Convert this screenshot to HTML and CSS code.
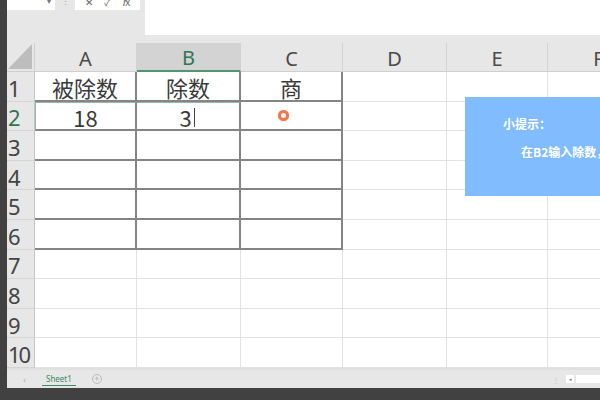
FILE: index.html
```html
<!DOCTYPE html>
<html lang="zh-CN">
<head>
<meta charset="utf-8">
<title>Sheet</title>
<link rel="stylesheet" href="styles.css">
</head>
<body>
<div class="app">
  <div class="edge"></div>
  <div class="main">
    <div class="fbar">
      <div class="namebox"><span class="nb-arrow">▾</span></div>
      <div class="sep">⋮</div>
      <div class="fbtns"><span>✕</span><span>✓</span><span><i>f</i>x</span></div>
      <div class="finput"></div>
    </div>
    <div class="sheet">
      <div class="corner"><svg width="24" height="25" viewBox="0 0 24 25"><polygon points="24,0 24,25 0,25" fill="#bdbdbd"/></svg></div>
      <div class="ch">A</div>
      <div class="ch sel">B</div>
      <div class="ch">C</div>
      <div class="ch">D</div>
      <div class="ch">E</div>
      <div class="ch">F</div>

      <div class="rh">1</div>
      <div class="c t txt">被除数</div>
      <div class="c t txt">除数</div>
      <div class="c t txt">商</div>
      <div class="c"></div><div class="c"></div><div class="c"></div>

      <div class="rh rsel">2</div>
      <div class="c t txt g1">18</div>
      <div class="c t txt g2"><span class="num3">3</span><span class="caret"></span></div>
      <div class="c t dotcell"><span class="dot"></span></div>
      <div class="c"></div><div class="c"></div><div class="c"></div>

      <div class="rh">3</div>
      <div class="c t"></div><div class="c t"></div><div class="c t"></div>
      <div class="c"></div><div class="c"></div><div class="c"></div>

      <div class="rh">4</div>
      <div class="c t"></div><div class="c t"></div><div class="c t"></div>
      <div class="c"></div><div class="c"></div><div class="c"></div>

      <div class="rh">5</div>
      <div class="c t"></div><div class="c t"></div><div class="c t"></div>
      <div class="c"></div><div class="c"></div><div class="c"></div>

      <div class="rh">6</div>
      <div class="c t"></div><div class="c t"></div><div class="c t"></div>
      <div class="c"></div><div class="c"></div><div class="c"></div>

      <div class="rh">7</div>
      <div class="c"></div><div class="c"></div><div class="c"></div>
      <div class="c"></div><div class="c"></div><div class="c"></div>

      <div class="rh">8</div>
      <div class="c"></div><div class="c"></div><div class="c"></div>
      <div class="c"></div><div class="c"></div><div class="c"></div>

      <div class="rh">9</div>
      <div class="c"></div><div class="c"></div><div class="c"></div>
      <div class="c"></div><div class="c"></div><div class="c"></div>

      <div class="rh">10</div>
      <div class="c"></div><div class="c"></div><div class="c"></div>
      <div class="c"></div><div class="c"></div><div class="c"></div>

      <div class="tip">
        <div class="tip-title">小提示：</div>
        <div class="tip-body">在B2输入除数，C2显示商</div>
      </div>
    </div>
    <div class="tabs">
      <span class="tab-nav">‹</span>
      <span class="tab">Sheet1</span>
      <span class="tab-add">+</span>
      <span class="spacer"></span>
      <span class="sb-dots">⋮</span>
      <span class="sb-btn">◂</span>
      <span class="sb-track"></span>
    </div>
  </div>
</div>
</body>
</html>
```

FILE: styles.css
```css
* { box-sizing: border-box; }
html, body { margin: 0; padding: 0; }
body {
  width: 600px;
  height: 400px;
  overflow: hidden;
  background: #414141;
  font-family: "Noto Sans CJK SC", "Noto Sans", sans-serif;
}
.app { display: flex; width: 600px; height: 388px; }
.edge { width: 7px; background: #414141; flex: none; }
.main { flex: 1; display: flex; flex-direction: column; background: #e7e7e7; overflow: hidden; min-width: 0; }

/* formula bar */
.fbar { height: 43px; display: flex; align-items: flex-start; flex: none; }
.namebox {
  width: 48px; height: 10px; background: #fff; position: relative; overflow: hidden;
}
.nb-arrow { position: absolute; right: 4px; top: -5px; font-size: 8px; color: #777; }
.sep { width: 20px; height: 10px; overflow: hidden; font-size: 9px; line-height: 4px; color: #aaa; text-align: center; }
.fbtns {
  width: 65px; height: 10px; background: #fff; overflow: hidden;
  display: flex; justify-content: space-around; padding: 0 4px;
}
.fbtns span { font-size: 10px; line-height: 6px; color: #666; margin-top: -1px; }
.fbtns i { font-style: italic; }
.finput { margin-left: 5px; flex: 1; height: 35px; background: #fff; }

/* sheet grid */
.sheet {
  position: relative;
  display: grid;
  width: 643px;
  grid-template-columns: 28px 102px 104px 102px 104px 101px 102px;
  grid-template-rows: 29px repeat(10, 29.6px);
  background: #fff;
  flex: none;
}
.corner {
  background: #e7e7e7; border-right: 1px solid #cfcfcf; border-bottom: 1px solid #cfcfcf;
  display: flex; align-items: flex-end; justify-content: flex-end; padding: 0 2px 2px 0;
}
.ch {
  background: #e7e7e7; border-right: 1px solid #d2d2d2; border-bottom: 1px solid #cfcfcf;
  display: flex; align-items: center; justify-content: center;
  font-family: "Noto Sans", sans-serif; font-size: 20px; color: #4a4a4a; padding-top: 2px;
}
.ch.sel { background: #d3d3d3; color: #2f7552; border-bottom: 2px solid #4f9672; }
.rh {
  background: #e7e7e7; border-right: 1px solid #c4c4c4; border-bottom: 1px solid #d4d4d4;
  font-family: "Noto Sans", sans-serif; font-size: 22px; color: #444;
  display: flex; align-items: center; padding-left: 1px; letter-spacing: -2px; padding-top: 3px;
  overflow: hidden;
}
.rh.rsel { color: #2f7552; }
.c { border-right: 1px solid #e2e2e2; border-bottom: 1px solid #e2e2e2; }
.c.t { border-right: 2px solid #858585; border-bottom: 2px solid #858585; }
.txt {
  display: flex; align-items: center; justify-content: center;
  font-size: 22px; color: #3a3a3a; padding-top: 3px;
}
.g1 { border-color: #82b39a; border-left: 1px solid #8fbca5; border-top: 1px solid #8fbca5; }
.g2 { border-right-color: #82b39a; border-bottom-color: #82b39a; border-top: 1px solid #8fbca5; }
.num3 { margin-left: -2px; }
.caret { width: 1px; height: 19px; background: #444; margin-left: 2px; }
.dotcell { display: flex; align-items: center; justify-content: center; padding-right: 16px; }
.dot {
  width: 11px; height: 11px; border-radius: 50%;
  border: 3px solid #ea7a4e; background: #fdf2ee; box-shadow: 0 0 1px #f0a080;
}

.tip {
  position: absolute; left: 458px; top: 54px; width: 150px; height: 99px;
  background: #80bcff; color: #fff; overflow: hidden; white-space: nowrap;
}
.tip-title { position: absolute; left: 38px; top: 18px; font-size: 12px; font-weight: 700; }
.tip-body { position: absolute; left: 56px; top: 46px; font-size: 12px; font-weight: 700; }

/* tab bar */
.tabs {
  flex: 1; display: flex; align-items: center; background: #e7e7e7;
  border-top: 2px solid #e0e0e0; font-family: "Noto Sans", sans-serif; padding-top: 1px;
}
.tab-nav { width: 35px; text-align: center; font-size: 8px; color: #aaa; }
.tab {
  font-size: 8px; color: #3c8a62; padding: 0 4px 1px; border-bottom: 1px solid #3c8a62;
  margin-right: 16px; line-height: 11px;
}
.tab-add {
  width: 10px; height: 10px; border: 1px solid #bbb; border-radius: 50%;
  font-size: 8px; line-height: 8px; text-align: center; color: #aaa;
}
.spacer { flex: 1; }
.sb-dots { font-size: 8px; color: #bbb; margin-right: 6px; }
.sb-btn { width: 8px; height: 8px; background: #fff; font-size: 5px; line-height: 8px; text-align: center; color: #777; margin-right: 2px; }
.sb-track { width: 24px; height: 8px; background: #fff; }
```
